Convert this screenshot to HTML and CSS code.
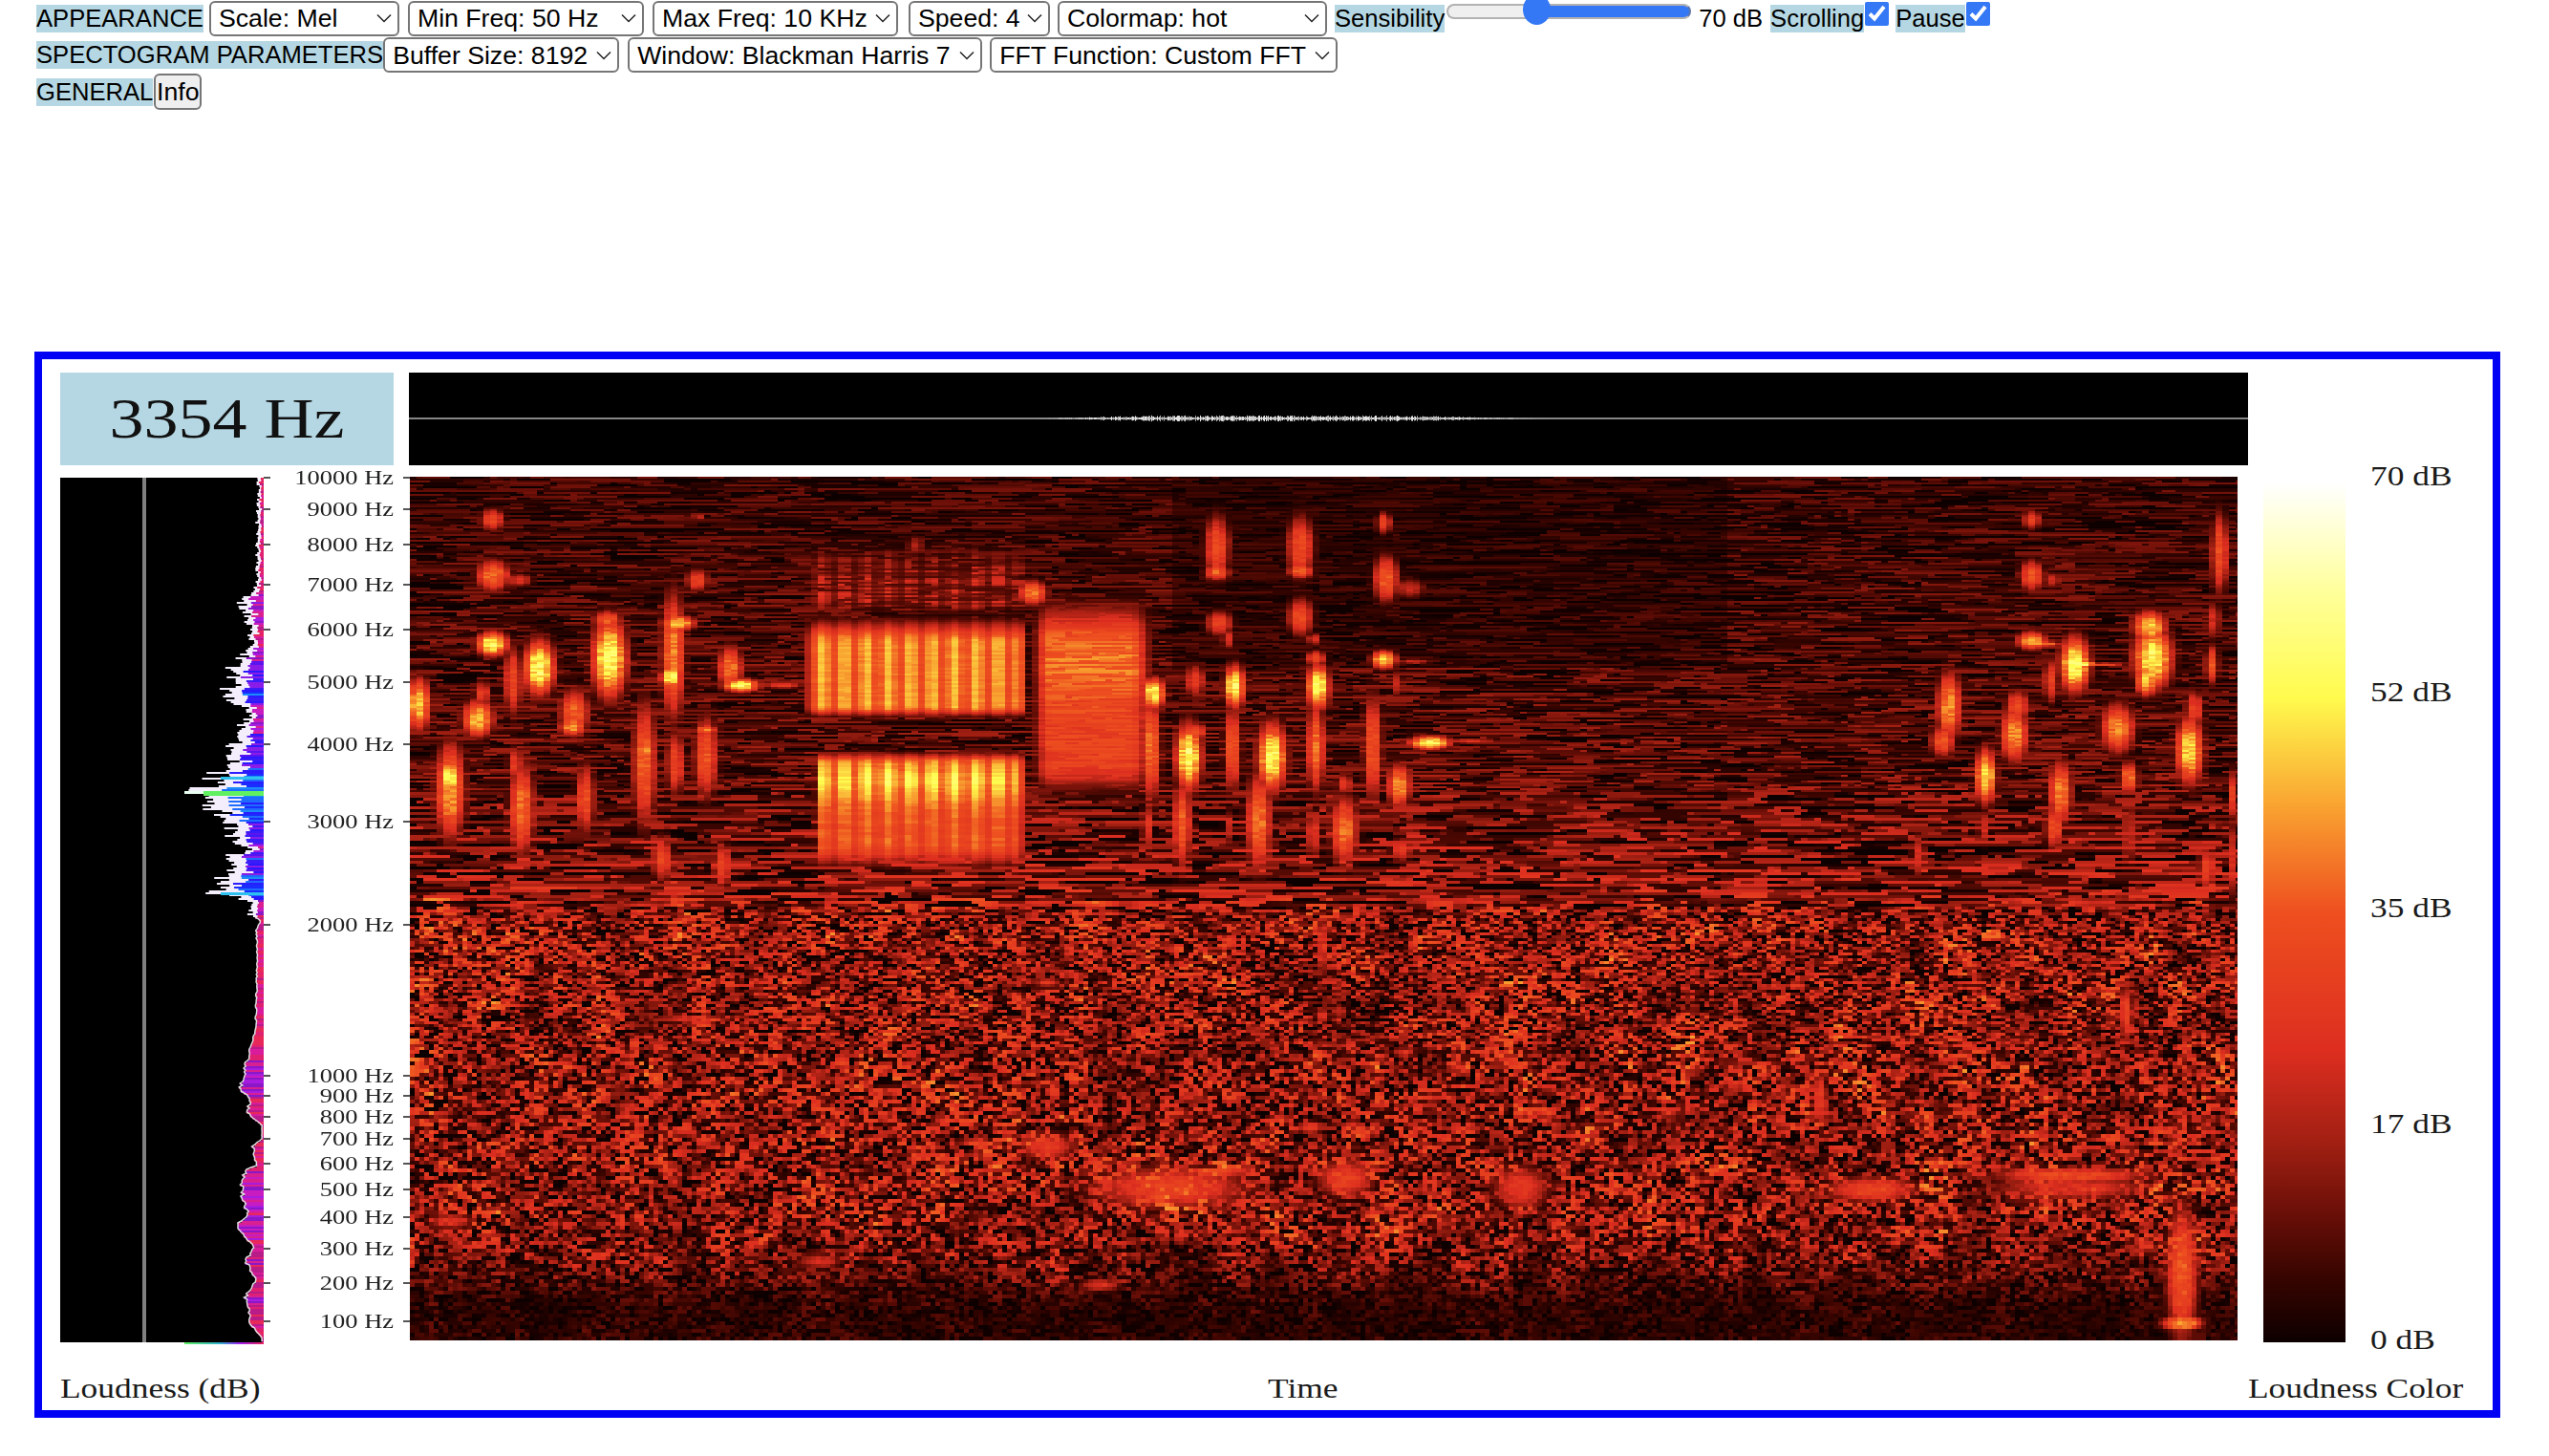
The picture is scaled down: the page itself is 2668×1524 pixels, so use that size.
FILE: index.html
```html
<!DOCTYPE html>
<html lang="en">
<head>
    <meta charset="UTF-8">
    <title>Spectrogram</title>
    <link rel="stylesheet" href="styles.css">
</head>
<body>
    <div class="toolbar">
        <div class="toolbar-row">
            <span class="tag tag-first">APPEARANCE</span>
            <select class="picker picker-scale"><option>Scale: Mel</option></select>
            <select class="picker picker-min"><option>Min Freq: 50 Hz</option></select>
            <select class="picker picker-max"><option>Max Freq: 10 KHz</option></select>
            <select class="picker picker-speed"><option>Speed: 4</option></select>
            <select class="picker picker-colormap"><option>Colormap: hot</option></select>
            <span class="tag">Sensibility</span>
            <input class="sensibility" type="range" min="0" max="100" value="35">
            <span class="db-value">70 dB</span>
            <span class="tag">Scrolling</span>
            <input class="check" type="checkbox" checked>
            <span class="tag tag-pause">Pause</span>
            <input class="check" type="checkbox" checked>
        </div>
        <div class="toolbar-row">
            <span class="tag">SPECTOGRAM PARAMETERS</span>
            <select class="picker picker-buffer"><option>Buffer Size: 8192</option></select>
            <select class="picker picker-window"><option>Window: Blackman Harris 7</option></select>
            <select class="picker picker-fft"><option>FFT Function: Custom FFT</option></select>
        </div>
        <div class="toolbar-row">
            <span class="tag">GENERAL</span>
            <button class="info-button">Info</button>
        </div>
    </div>

    <div class="scope">
        <div class="scope-top">
            <div class="freq-panel"><span class="freq-readout">3354 Hz</span></div>
            <canvas id="wave" class="wave" width="1925" height="97"></canvas>
        </div>

        <div class="scope-main">
            <canvas id="loudness" class="loudness" width="213" height="908"></canvas>
            <div id="axis" class="axis"></div>
            <canvas id="spectro" class="spectro" width="1913" height="904"></canvas>
            <div class="color-bar"></div>
            <div class="db-scale">
                <span class="db-label">70 dB</span>
                <span class="db-label">52 dB</span>
                <span class="db-label">35 dB</span>
                <span class="db-label">17 dB</span>
                <span class="db-label">0 dB</span>
            </div>
        </div>

        <div class="scope-footer">
            <span class="caption">Loudness (dB)</span>
            <span class="caption">Time</span>
            <span class="caption">Loudness Color</span>
        </div>
    </div>

    <script src="script.js"></script>
</body>
</html>
```

FILE: styles.css
```css
body {
    margin: 0;
    background: white;
    font-family: "Liberation Sans", Arial, sans-serif;
    color: black;
}

/* top controls */
.toolbar {
    padding-left: 38px;
    height: 368px;
    box-sizing: border-box;
}

.toolbar-row {
    display: flex;
    align-items: center;
    margin-bottom: 1px;
}

.toolbar-row:first-child {
    height: 38px;
}

.tag {
    background: #b5d7e3;
    font-size: 25.6px;
    line-height: 29px;
    white-space: nowrap;
}

.tag-first {
    margin-right: 6px;
}

.tag-pause {
    margin-left: 7px;
}

.picker {
    appearance: none;
    height: 37px;
    box-sizing: border-box;
    margin-right: 9px;
    padding: 0 0 0 8px;
    border: 2px solid #767676;
    border-radius: 6px;
    background: white url("data:image/svg+xml,%3Csvg xmlns='http://www.w3.org/2000/svg' width='16' height='10'%3E%3Cpath d='M1 1.5L8 8.5L15 1.5' fill='none' stroke='%23222' stroke-width='1.5'/%3E%3C/svg%3E") no-repeat right 6px center;
    font-family: "Liberation Sans", Arial, sans-serif;
    font-size: 26.67px;
    color: black;
}

.picker-scale { width: 199px; }
.picker-min { width: 247px; }
.picker-max { width: 257px; margin-right: 11px; }
.picker-speed { width: 148px; margin-right: 8px; }
.picker-colormap { width: 282px; margin-right: 8px; }
.picker-buffer { width: 247px; }
.picker-window { width: 371px; margin-right: 8px; }
.picker-fft { width: 364px; }

.sensibility {
    appearance: none;
    align-self: flex-start;
    width: 256px;
    height: 16px;
    margin: 4px 8px 0 2px;
    border: 2px solid #b2b2b2;
    border-right-color: #5c76a8;
    border-radius: 8px;
    box-sizing: border-box;
    background: linear-gradient(to right, #efefef 36%, #3478f6 36%);
}

.sensibility::-webkit-slider-thumb {
    appearance: none;
    width: 29px;
    height: 32px;
    margin-top: -4px;
    border-radius: 50%;
    background: #3478f6;
}

.db-value {
    margin-right: 8px;
    font-size: 25.6px;
}

.check {
    align-self: flex-start;
    width: 25px;
    height: 25px;
    margin: 2px 0 0 1px;
    accent-color: #3478f6;
}

.info-button {
    width: 50px;
    height: 38px;
    margin-left: 1px;
    padding: 0;
    border: 2px solid #767676;
    border-radius: 6px;
    background: #efefef;
    font-family: "Liberation Sans", Arial, sans-serif;
    font-size: 26.67px;
    color: black;
}

/* spectrogram frame */
.scope {
    width: 2581px;
    height: 1116px;
    margin-left: 36px;
    box-sizing: border-box;
    border: 8px solid #0000f5;
    padding: 14px 0 0 19px;
}

.scope-top {
    display: flex;
    gap: 16px;
}

.freq-panel {
    display: flex;
    align-items: center;
    justify-content: center;
    width: 349px;
    height: 97px;
    background: #b5d7e3;
}

.freq-readout {
    font-family: "Liberation Serif", "Times New Roman", serif;
    font-size: 60px;
    color: #111;
    transform: scaleX(1.2);
}

.wave {
    display: block;
}

.scope-main {
    display: flex;
    align-items: flex-start;
    height: 906px;
    margin-top: 12px;
}

.loudness {
    display: block;
    margin-top: 1px;
}

.axis {
    position: relative;
    width: 153px;
    height: 906px;
}

.axis-row {
    position: absolute;
    left: 0;
    right: 0;
    display: flex;
    align-items: center;
    height: 24px;
    margin-top: -12px;
}

.axis-tick {
    width: 7px;
    height: 2px;
    background: #555;
}

.axis-label {
    flex: 1;
    padding-right: 10px;
    font-family: "Liberation Serif", "Times New Roman", serif;
    font-size: 21px;
    color: #222;
    text-align: right;
    white-space: nowrap;
    transform: scaleX(1.26);
    transform-origin: calc(100% - 10px) center;
}

.spectro {
    display: block;
}

.color-bar {
    flex: none;
    width: 86px;
    height: 900px;
    margin: 6px 0 0 27px;
    background: linear-gradient(to top, #0d0000 0%, #3a0500 8%, #6a0f08 15%, #a01f12 23%, #dd2e20 34%, #ee4f1f 50%, #f9a030 62%, #fffb4e 75%, #ffff99 87%, #ffffff 100%);
}

.db-scale {
    display: flex;
    flex-direction: column;
    justify-content: space-between;
    height: 938px;
    margin: -18px 0 0 26px;
}

.db-label {
    font-family: "Liberation Serif", "Times New Roman", serif;
    font-size: 29.5px;
    line-height: 34px;
    color: #1a1a1a;
    white-space: nowrap;
    transform: scaleX(1.2);
    transform-origin: left center;
}

.scope-footer {
    display: grid;
    grid-template-columns: 1264px 1026px auto;
    margin-top: 31px;
}

.caption {
    font-family: "Liberation Serif", "Times New Roman", serif;
    font-size: 29.5px;
    line-height: 34px;
    color: #1a1a1a;
    white-space: nowrap;
    transform: scaleX(1.2);
    transform-origin: left center;
}
```

FILE: script.js
```js
// small seeded random so every load paints the same picture
let seed = 20240611;
function rnd() {
    seed = (seed + 0x6D2B79F5) | 0;
    let t = Math.imul(seed ^ (seed >>> 15), 1 | seed);
    t = (t + Math.imul(t ^ (t >>> 7), 61 | t)) ^ t;
    return ((t ^ (t >>> 14)) >>> 0) / 4294967296;
}

function smooth(a, b, x) {
    const t = Math.min(1, Math.max(0, (x - a) / (b - a)));
    return t * t * (3 - 2 * t);
}

// hot colormap, same stops as .color-bar
const STOPS = [
    [0, 13, 0, 0], [0.08, 58, 5, 0], [0.15, 106, 15, 8], [0.23, 160, 31, 18],
    [0.34, 221, 46, 32], [0.5, 238, 79, 31], [0.62, 249, 160, 48],
    [0.75, 255, 251, 78], [0.87, 255, 255, 153], [1, 255, 255, 255]
];

function hot(v) {
    v = Math.min(1, Math.max(0, v));
    for (let i = 1; i < STOPS.length; i++) {
        if (v <= STOPS[i][0]) {
            const a = STOPS[i - 1], b = STOPS[i];
            const t = (v - a[0]) / (b[0] - a[0]);
            return `rgb(${a[1] + (b[1] - a[1]) * t | 0},${a[2] + (b[2] - a[2]) * t | 0},${a[3] + (b[3] - a[3]) * t | 0})`;
        }
    }
    return "#fff";
}

// Frequency axis
const TICKS = [
    ["10000 Hz", 500], ["9000 Hz", 533], ["8000 Hz", 570], ["7000 Hz", 612], ["6000 Hz", 659],
    ["5000 Hz", 714], ["4000 Hz", 779], ["3000 Hz", 860], ["2000 Hz", 968], ["1000 Hz", 1126],
    ["900 Hz", 1147], ["800 Hz", 1169], ["700 Hz", 1192], ["600 Hz", 1218], ["500 Hz", 1245],
    ["400 Hz", 1274], ["300 Hz", 1307], ["200 Hz", 1343], ["100 Hz", 1383]
];

const axis = document.getElementById("axis");
TICKS.forEach(([text, y]) => {
    const row = document.createElement("div");
    row.className = "axis-row";
    row.style.top = (y - 499) + "px";
    row.innerHTML = `<div class="axis-tick"></div><div class="axis-label">${text}</div><div class="axis-tick"></div>`;
    axis.appendChild(row);
});

// Blobs of energy: [x, y, rx, ry, value], read off crops of the picture
const CROPS = [
    { sx: 2.178, ox: 0, oy: 0, list: [
        [188,135,28,35,.45],[190,310,40,50,.55],[250,325,30,20,.35],[188,525,38,40,.78],[235,640,22,110,.45],
        [295,600,38,90,.78],[155,760,38,60,.65],[165,680,20,40,.4],[20,715,28,85,.68],[92,985,35,155,.62],
        [92,940,28,60,.74],[255,1040,30,150,.55],[240,900,18,50,.4],[375,740,35,75,.52],[370,785,30,30,.62],
        [455,570,42,130,.78],[450,450,35,30,.5],[400,1010,22,110,.48],[535,900,28,200,.52],[535,860,25,40,.6],
        [600,560,28,200,.58],[595,630,25,35,.78],[612,460,40,25,.68],[605,900,22,100,.45],[675,880,28,130,.5],
        [675,795,25,15,.6],[730,600,30,70,.55],[755,655,45,22,.78],[850,655,50,10,.4],[575,1200,25,70,.45],
        [712,1220,22,70,.42],[605,1330,25,18,.42],[655,325,28,35,.42],[658,125,15,12,.3],[1152,215,20,30,.25],
        [1420,365,35,40,.55]
    ]},
    { sx: 2.178, ox: 721, oy: 0, list: [
        [125,680,28,50,.78],[120,850,22,170,.55],[110,1100,12,80,.38],[220,640,25,50,.4],[270,220,30,100,.47],
        [270,300,30,25,.52],[275,460,32,40,.42],[295,510,15,30,.35],[310,660,25,70,.78],[305,850,20,140,.5],
        [295,1100,10,50,.3],[205,880,32,110,.78],[190,1090,22,140,.52],[225,800,20,25,.5],[460,220,32,100,.47],
        [460,295,30,25,.53],[460,440,30,60,.47],[490,510,15,20,.35],[500,660,28,75,.76],[495,850,22,140,.55],
        [490,1120,18,70,.38],[495,570,25,25,.42],[395,880,35,110,.78],[365,1080,30,160,.55],[560,1110,32,110,.55],
        [560,965,20,30,.38],[625,850,22,170,.5],[650,145,18,35,.42],[655,320,30,75,.5],[710,350,35,30,.3],
        [650,575,30,30,.72],[720,580,40,8,.3],[755,835,50,22,.78],[850,830,60,8,.35],[685,970,28,70,.6],
        [690,1170,25,35,.42],[680,650,15,40,.3],[1540,1235,25,12,.38],[1150,1300,18,15,.3]
    ]},
    { sx: 3, ox: 1441, oy: 0, list: [
        [510,720,40,110,.6],[490,830,40,50,.5],[770,135,30,30,.42],[770,310,40,50,.48],[835,325,30,25,.3],
        [770,515,50,30,.62],[800,525,60,8,.6],[905,590,50,90,.78],[930,588,40,10,.85],[830,640,25,70,.42],
        [1000,590,60,6,.45],[1140,470,55,50,.68],[1150,570,65,100,.76],[1130,640,35,50,.7],[725,720,40,50,.45],
        [715,810,45,90,.6],[625,940,35,90,.72],[620,1100,20,50,.32],[1040,790,55,80,.58],[1075,945,30,50,.55],
        [1075,1120,20,100,.32],[1265,860,45,110,.7],[1280,730,30,60,.42],[860,990,38,100,.58],[840,1100,30,70,.48],
        [935,1255,20,30,.3],[1360,240,28,130,.48],[1335,590,22,60,.5],[1340,450,25,60,.32],[1320,1230,28,70,.42],
        [1405,1000,12,80,.5],[1405,1200,10,130,.42],[415,1190,22,70,.33],[720,1335,50,20,.3]
    ]},
    { sx: 0.8167, ox: 0, oy: 451, list: [
        [650,880,70,70,.42],[690,830,35,12,.52],[660,890,30,20,.5],[800,850,25,60,.42],[950,880,25,70,.38],
        [545,750,25,45,.38],[1250,885,40,40,.45],[1420,840,70,25,.47],[1420,880,70,40,.35],[1515,1150,14,220,.5],
        [1515,1305,18,25,.65],[1467,330,6,90,.42],[1205,600,6,90,.4],[780,120,4,110,.38],[780,340,6,20,.4],
        [1375,175,15,12,.38],[35,985,20,25,.35],[350,1110,20,25,.32],[590,1185,18,20,.35],[770,690,12,20,.4],
        [240,350,40,12,.33],[850,455,10,15,.35],[20,325,20,10,.33],[165,325,10,12,.33],[545,235,12,14,.38],
        [370,535,14,12,.33]
    ]}
];

const blobs = [];
CROPS.forEach(c => {
    c.list.forEach(b => {
        blobs.push({ x: c.ox + b[0] / c.sx, y: c.oy + b[1] / 3, rx: b[2] / c.sx, ry: b[3] / 3, v: b[4] });
    });
});

function blobValue(x, y) {
    let best = 0;
    for (const b of blobs) {
        const dx = (x - b.x) / b.rx, dy = (y - b.y) / b.ry;
        if (Math.abs(dx) > 2 || Math.abs(dy) > 2) continue;
        const d = dx * dx + dy * dy;
        const v = b.v * Math.exp(-Math.pow(d, 1.4) * 1.1);
        if (v > best) best = v;
    }
    return best;
}

// The striped call in the middle and the noisy burst next to it
function callValue(x, y, r) {
    let v = 0;
    const stripe = 0.5 + 0.5 * Math.cos(2 * Math.PI * (x - 432) / 23);
    const xEnv = smooth(408, 425, x) * (1 - smooth(636, 650, x));

    const upper = smooth(138, 175, y) * (1 - smooth(240, 256, y));
    v = Math.max(v, xEnv * upper * (0.44 + 0.2 * stripe + 0.06 * r));

    const lowerX = smooth(420, 432, x) * (1 - smooth(636, 646, x));
    const lower = smooth(283, 300, y) * (1 - smooth(385, 420, y));
    const peak = 0.12 * Math.exp(-Math.pow((y - 318) / 22, 2));
    v = Math.max(v, lowerX * lower * (0.38 + 0.14 * stripe + peak + peak * stripe + 0.06 * r));

    const faint = smooth(45, 110, y) * (1 - smooth(130, 150, y));
    v = Math.max(v, xEnv * faint * (0.1 + 0.22 * stripe * r + 0.08 * r));

    const burstX = smooth(645, 670, x) * (1 - smooth(755, 785, x));
    const burst = smooth(110, 170, y) * (1 - smooth(300, 345, y));
    const glow = 0.12 * Math.exp(-Math.pow((y - 195) / 35, 2));
    v = Math.max(v, burstX * burst * (0.36 + 0.14 * r + glow));
    return v;
}

// lumpy grid used to break up the noise floor
const COARSE_W = 90, COARSE_H = 40;
const coarse = [];
for (let i = 0; i < COARSE_W * COARSE_H; i++) coarse.push(rnd());

function coarseValue(x, y) {
    const fx = x / 22, fy = y / 24;
    const ix = Math.floor(fx), iy = Math.floor(fy);
    const tx = fx - ix, ty = fy - iy;
    const at = (a, b) => coarse[(b % COARSE_H) * COARSE_W + (a % COARSE_W)];
    return (at(ix, iy) * (1 - tx) + at(ix + 1, iy) * tx) * (1 - ty) + (at(ix, iy + 1) * (1 - tx) + at(ix + 1, iy + 1) * tx) * ty;
}

function floorLevel(x, y) {
    let a;
    if (y < 300) a = 0.1 + 0.05 * y / 300;
    else if (y < 440) a = 0.15 + 0.1 * (y - 300) / 140;
    else if (y < 780) a = 0.27;
    else a = 0.27 - 0.2 * smooth(780, 880, y);
    if (y < 200 && x > 800 && x < 1380) a *= 0.65;
    return a;
}

function drawSpectro() {
    const canvas = document.getElementById("spectro");
    const buffer = document.createElement("canvas");
    buffer.width = canvas.width;
    buffer.height = canvas.height;
    const ctx = buffer.getContext("2d");
    ctx.fillStyle = "#0d0000";
    ctx.fillRect(0, 0, buffer.width, buffer.height);

    let y = 0;
    while (y < canvas.height) {
        const h = y < 330 ? 2 : y < 600 ? 3 : 4;
        const w = y < 460 ? 7 : 5;
        const change = y < 450 ? 0.3 : 0.85;
        let r = rnd();
        for (let x = 0; x < canvas.width; x += w) {
            if (rnd() < change) r = rnd();
            const cx = x + w / 2, cy = y + h / 2;
            const lump = 0.55 + 0.9 * coarseValue(cx, cy);
            const base = floorLevel(cx, cy) * Math.max(0, 1.8 * r - 0.15) * (y > 440 ? lump : 1);
            const detail = 0.88 + 0.22 * rnd();
            const v = Math.max(base, blobValue(cx, cy) * detail, callValue(cx, cy, r));
            ctx.fillStyle = hot(v);
            ctx.fillRect(x, y, w, h);
        }
        y += h;
    }

    const out = canvas.getContext("2d");
    out.filter = "blur(0.7px)";
    out.drawImage(buffer, 0, 0);
}

// Loudness outline: [page y, how far it reaches left of the edge]
const LOUD = [
    [500,7],[560,9],[612,8],[630,32],[640,22],[660,17],[673,15],[680,24],[690,30],[702,47],[710,35],[727,55],
    [737,28],[750,20],[757,27],[767,30],[780,45],[797,40],[813,65],[831,83],[847,60],[857,55],[870,38],[880,40],
    [887,15],[898,55],[907,30],[920,60],[935,58],[942,20],[957,18],[963,3],[973,8],[1000,7],[1040,8],[1080,9],
    [1100,15],[1115,20],[1140,25],[1150,15],[1165,18],[1178,2],[1192,2],[1200,12],[1220,8],[1225,20],[1245,25],
    [1270,18],[1285,30],[1295,20],[1305,10],[1320,20],[1340,8],[1357,20],[1375,15],[1385,15],[1400,2],[1405,2]
];

function loudAt(y) {
    for (let i = 1; i < LOUD.length; i++) {
        if (y <= LOUD[i][0]) {
            const a = LOUD[i - 1], b = LOUD[i];
            return a[1] + (b[1] - a[1]) * (y - a[0]) / (b[0] - a[0]);
        }
    }
    return 2;
}

function loudColor(env) {
    const pick = list => list[Math.floor(rnd() * list.length)];
    if (env > 50) return pick(["#1a2cff", "#1e6cff", "#1c8cf8", "#2a1cff"]);
    if (env > 30) return pick(["#5a14f0", "#3a1cf8", "#8a1ce8", "#2a18ff"]);
    if (env > 18) return pick(["#a81ce0", "#c81cc0", "#8a18c8", "#d82090"]);
    return pick(["#e02070", "#d81c9c", "#e82858", "#b81c88"]);
}

function drawLoudness() {
    const canvas = document.getElementById("loudness");
    const ctx = canvas.getContext("2d");
    ctx.fillStyle = "black";
    ctx.fillRect(0, 0, 213, 905);
    ctx.fillStyle = "#808080";
    ctx.fillRect(86, 0, 4, 905);

    const points = [];
    for (let y = 0; y < 905; y += 2) {
        const pageY = y + 500;
        const env = loudAt(pageY);
        const upper = pageY < 960;
        const reach = upper ? env * (0.55 + 0.5 * rnd()) : env * (0.85 + 0.2 * rnd());
        if (upper) {
            ctx.fillStyle = "#f4eefc";
            ctx.fillRect(213 - reach, y, reach, 2);
            const inner = reach * (0.35 + 0.35 * rnd());
            ctx.fillStyle = loudColor(env);
            ctx.fillRect(213 - inner, y, inner, 2);
        } else {
            ctx.fillStyle = loudColor(env);
            ctx.fillRect(213 - reach, y, reach, 2);
        }
        points.push([213 - reach, y]);
    }

    // the loud rows stand out in green and cyan
    ctx.fillStyle = "#60f060";
    ctx.fillRect(213 - 63, 328, 63, 5);
    ctx.fillStyle = "#e8fff0";
    ctx.fillRect(213 - 83, 328, 20, 3);
    ctx.fillStyle = "#30c0f0";
    ctx.fillRect(213 - 45, 313, 45, 3);
    ctx.fillRect(213 - 45, 434, 45, 3);

    // thin pale line round the quieter part
    ctx.strokeStyle = "#e0dce0";
    ctx.lineWidth = 1.5;
    ctx.beginPath();
    points.filter(p => p[1] >= 460).forEach((p, i) => {
        if (i === 0) ctx.moveTo(p[0], p[1]);
        else ctx.lineTo(p[0], p[1]);
    });
    ctx.stroke();

    const strip = ctx.createLinearGradient(130, 0, 213, 0);
    strip.addColorStop(0, "#60f060");
    strip.addColorStop(0.45, "#30b0d0");
    strip.addColorStop(0.7, "#a020f0");
    strip.addColorStop(1, "#e8205a");
    ctx.fillStyle = strip;
    ctx.fillRect(130, 905, 83, 2);
}

function drawWave() {
    const ctx = document.getElementById("wave").getContext("2d");
    ctx.fillStyle = "black";
    ctx.fillRect(0, 0, 1925, 97);
    ctx.fillStyle = "#868686";
    ctx.fillRect(0, 47, 1925, 2);
    for (let x = 650; x < 1200; x++) {
        const level = smooth(650, 780, x) * (1 - smooth(1020, 1200, x));
        const amp = level * (0.6 + 2.6 * rnd());
        ctx.fillStyle = rnd() < 0.5 ? "#e4e4e4" : "#b4b4b4";
        ctx.fillRect(x, 48 - amp, 1, amp * 2);
    }
}

drawSpectro();
drawLoudness();
drawWave();
```
